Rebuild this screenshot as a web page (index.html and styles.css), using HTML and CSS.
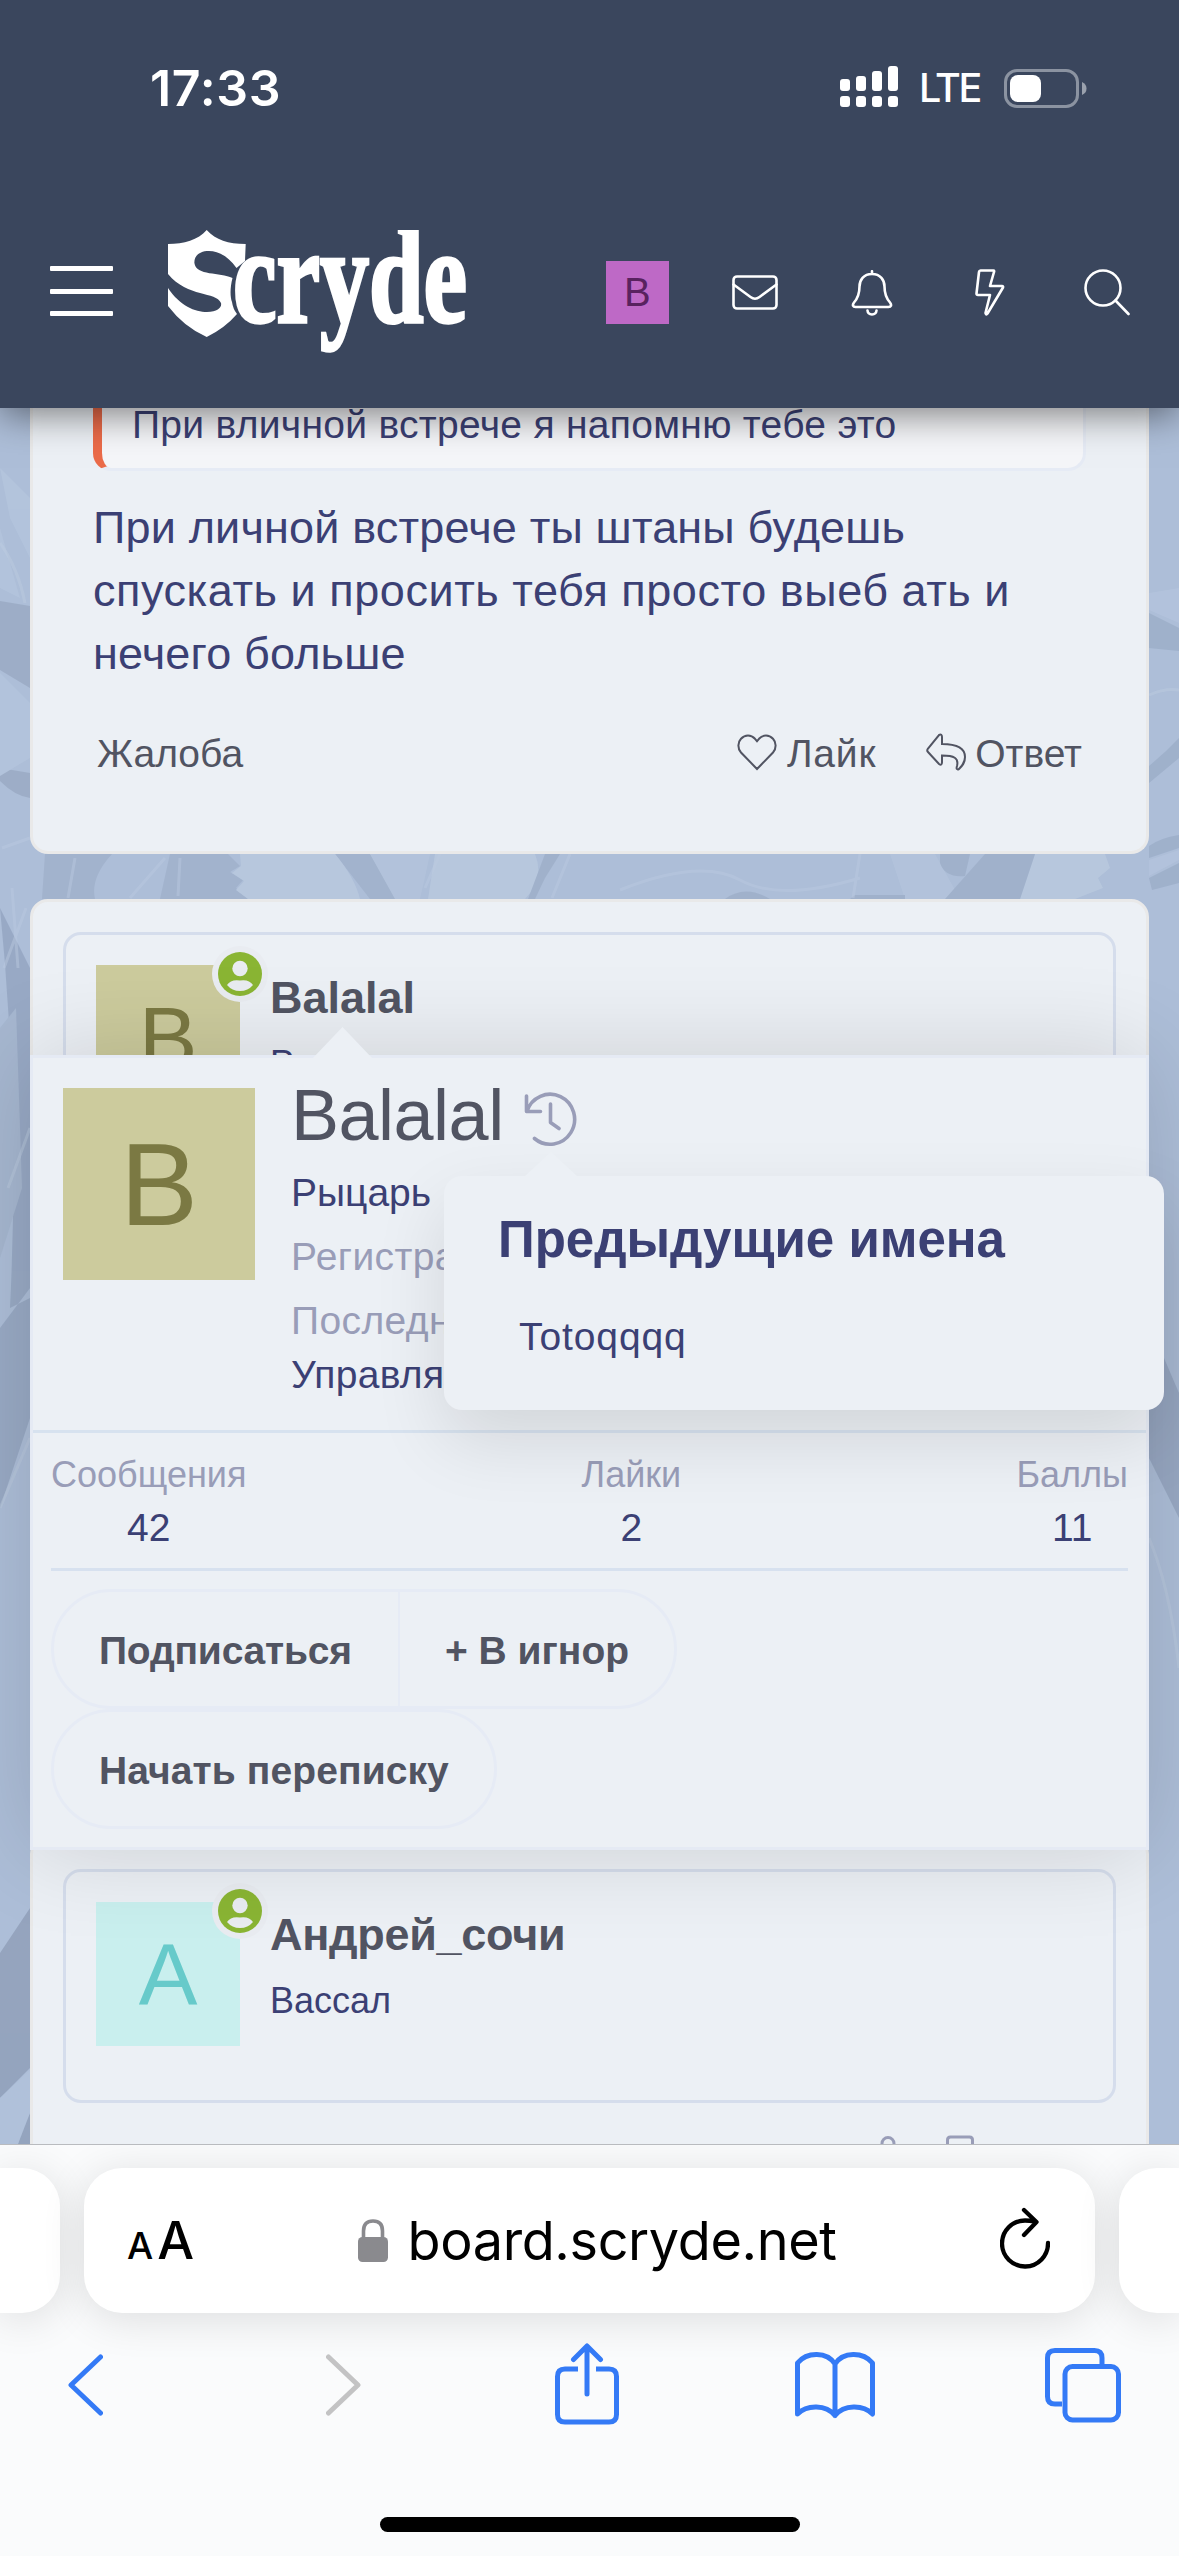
FILE: index.html
```html
<!DOCTYPE html>
<html lang="ru">
<head>
<meta charset="utf-8">
<title>Scryde</title>
<link rel="stylesheet" href="styles.css">
</head>
<body>
<header class="header">
  <div class="status">
    <span class="clock">17:33</span>
    <svg class="signal" width="58" height="42" viewBox="0 0 58 42" fill="#fff">
      <rect x="0" y="13" width="10" height="12" rx="3"/><rect x="16" y="10" width="10" height="15" rx="3"/><rect x="32" y="5" width="10" height="20" rx="3"/><rect x="48" y="0" width="10" height="25" rx="3"/>
      <rect x="0" y="30" width="10" height="11" rx="3"/><rect x="16" y="30" width="10" height="11" rx="3"/><rect x="32" y="30" width="10" height="11" rx="3"/><rect x="48" y="30" width="10" height="11" rx="3"/>
    </svg>
    <span class="lte">LTE</span>
    <svg class="battery" width="83" height="39" viewBox="0 0 83 39">
      <rect x="1.5" y="1.5" width="72" height="36" rx="11.5" fill="none" stroke="#8b93a1" stroke-width="3"/>
      <rect x="6" y="6" width="31" height="27" rx="8" fill="#fff"/>
      <path d="M78 13 Q82.500 15 82.500 19.500 Q82.500 24 78 26Z" fill="#9aa1ad"/>
    </svg>
  </div>
  <nav class="navbar">
    <svg class="burger" width="63" height="52" viewBox="0 0 63 52" fill="#fff"><rect y="1" width="63" height="5" rx="1"/><rect y="24" width="63" height="5" rx="1"/><rect y="46" width="63" height="5" rx="1"/></svg>
    <svg class="logo" width="300" height="126" viewBox="0 0 300 126" role="img" aria-label="Scryde">
      <path fill="#fff" d="M38.700 0C48 10 60 14 77.700 14L77 31 68.500 38C60 26 50 21 41 21 30 21 26 27 26.400 33 28 46 52 42 64.500 48 62 58 62 66 64 72Q65 79 69 84 57 98 38.700 107 16 97 0 76V58C12 76 27 82 39 82 50 82 54 77 53 73 48 61 20 68 0 44V14C16 14 30 10 38.700 0Z"/>
      <text class="wordmark" x="65" y="92" textLength="234" lengthAdjust="spacingAndGlyphs">cryde</text>
    </svg>
    <div class="tools">
      <span class="tool"><span class="avatar avatar-xs">B</span></span>
      <span class="tool"><svg width="46" height="36" viewBox="0 0 46 36"><rect x="1.500" y="1.500" width="43" height="32" rx="3.500"/><path d="M1.500 9.500 18.500 22Q23 25.500 27.500 22L44.500 9.500"/></svg></span>
      <span class="tool"><svg width="42" height="46" viewBox="0 0 42 46"><path d="M21 1.200V4M21 4C12.500 4 8.500 10 8.500 16.500 8.500 24 7 28 3 32.500 1 35 2 37 4.500 37H37.500C40 37 41 35 39 32.500 35 28 33.500 24 33.500 16.500 33.500 10 29.500 4 21 4ZM16.500 40.500C17 45.800 25 45.800 25.500 40.500"/></svg></span>
      <span class="tool"><svg width="30" height="47" viewBox="0 0 30 47"><path d="M5.500 1.500H18.500Q19.500 1.500 19 3L15 17H27Q28.500 17 28 18.500L12.500 44.500Q11 46.500 10.500 44L15 26H3Q1.500 26 1.500 24.500L4 3Q4.200 1.500 5.500 1.500Z"/></svg></span>
      <span class="tool"><svg width="46" height="47" viewBox="0 0 46 47"><circle cx="19" cy="19" r="17.500"/><path d="M31.500 31.500 44.500 45"/></svg></span>
    </div>
  </nav>
</header>

<main class="page">
  <svg class="backdrop" width="1179" height="1736" viewBox="0 0 1179 1736" preserveAspectRatio="none">
    <rect width="1179" height="1736" fill="#adbed8"/>
    <g class="shapes">
    <path fill="#9aaac4" d="M0 193 30 198V280L0 262ZM0 373Q15 388 30 390V365L0 360Z"/>
    <path fill="#b4c5dd" d="M0 60 30 90V150L10 110ZM0 265 30 295V350L0 368ZM0 120 20 190 0 180Z"/>
    <path fill="#a0b1cb" d="M45 446H112Q90 470 95 491H42ZM170 446H228L240 458 230 464 243 472 236 480 250 491H160ZM335 446H370L400 491H370Z"/>
    <path fill="#bacadf" d="M240 446H335Q355 470 360 491H248L236 482 244 473 232 465 241 458ZM435 446H535Q545 470 525 491H428ZM1035 446H1105L1110 460 1098 470 1103 480 1075 491H1020Z"/>
    <path fill="#b4c4dc" d="M370 446H430Q425 470 420 491H395ZM890 446H935L960 491H905Z"/>
    <path fill="#9eafc9" d="M940 446H970L965 468Q945 470 940 455ZM985 446H1035L1020 491H945ZM725 491Q745 476 770 491ZM855 487H905V491H850ZM545 446H560L545 470 535 491H528Z"/>
    <path fill="#94a5c1" d="M0 500Q20 700 10 900L30 890V560ZM0 920 30 880V1010L0 1100Z"/>
    <path fill="#a5b6cf" d="M0 620 16 600 22 780 0 850Z"/>
    <path fill="#8e9eb8" d="M0 1545 30 1500V1660L0 1690ZM18 1736 22 1720 30 1705V1736Z"/>
    <path fill="#b1c2db" d="M0 1690 30 1662V1705L18 1736H0Z"/>
    <path fill="#9caec9" d="M1149 205 1179 220V243L1149 240ZM1149 358Q1165 345 1179 330V350L1149 375ZM1149 438Q1160 430 1179 427V440L1149 450ZM1149 470 1179 455V475L1152 482Z"/>
    <path fill="#b4c4dd" d="M1149 185 1179 180V215L1149 202ZM1149 452 1179 442V452L1149 468Z"/>
    <path fill="#94a4bf" d="M1164 950 1179 985V1110L1149 1050V980Z"/>
    </g>
    <g class="streaks"><path d="M0 135Q18 160 25 195M2 440 30 430M12 480 18 560M4 560 26 500M8 780 30 720M0 1100 30 1030M1149 287Q1165 280 1179 282M1149 1130Q1170 1180 1179 1260"/><path d="M75 450 68 490M165 450 130 490M180 450 178 488M440 446 425 480M570 446 552 490M620 482Q700 450 740 472T860 470M860 446 853 490"/></g>
  </svg>

  <article class="post post-first">
    <blockquote class="quote">При вличной встрече я напомню тебе это</blockquote>
    <p class="message">При личной встрече ты штаны будешь<br><span class="loose">спускать и просить тебя просто выеб ать и</span><br>нечего больше</p>
    <footer class="actions">
      <a class="report">Жалоба</a>
      <a class="like"><svg width="40" height="37" viewBox="0 0 40 37"><path d="M20 35 4 18.500C.5 14.500 .5 8.500 4 4.800 8 .5 14 .5 18 4.800L20 7.200 22 4.800C26 .5 32 .5 36 4.800 39.500 8.500 39.500 14.500 36 18.500Z"/></svg>Лайк</a>
      <a class="reply"><svg width="40" height="38" viewBox="0 0 40 38"><path d="M13 2Q16 .5 16 4V11C30 11 39 14 39 24 39 30 36 33 33 36 31 37 30 36 31 33 33 25 28 22.500 16 22.500V29Q16 33 13 31L2 19Q.5 17.500 2 15.500Z"/></svg>Ответ</a>
    </footer>
  </article>

  <article class="post post-second">
    <div class="user">
      <div class="avatar-wrap"><span class="avatar avatar-m olive">B</span><svg class="online" width="56" height="56" viewBox="0 0 56 56"><circle cx="28" cy="28" r="28" fill="#e9ecf1"/><circle cx="28" cy="28" r="22" fill="#8ab534"/><circle cx="28" cy="22.500" r="7.700" fill="#e9ecf1"/><path d="M15 39Q19 33 28 34.500 37 33 41 39 36 45 28 45T15 39Z" fill="#e9ecf1"/></svg></div>
      <div class="who"><b class="name">Balalal</b><span class="rank">Рыцарь</span></div>
    </div>
  </article>

  <article class="post post-third">
    <div class="user">
      <div class="avatar-wrap"><span class="avatar avatar-m aqua">A</span><svg class="online" width="56" height="56" viewBox="0 0 56 56"><circle cx="28" cy="28" r="28" fill="#e9ecf1"/><circle cx="28" cy="28" r="22" fill="#8ab534"/><circle cx="28" cy="22.500" r="7.700" fill="#e9ecf1"/><path d="M15 39Q19 33 28 34.500 37 33 41 39 36 45 28 45T15 39Z" fill="#e9ecf1"/></svg></div>
      <div class="who"><b class="name tight">Андрей_сочи</b><span class="rank">Вассал</span></div>
    </div>
    <div class="meta">
      <svg width="34" height="38" viewBox="0 0 34 38"><circle cx="17" cy="8.500" r="6"/></svg>
      <svg width="28" height="38" viewBox="0 0 28 38"><path d="M1.500 36V5Q1.500 2 4.500 2H23.500Q26.500 2 26.500 5V36L14 28Z"/></svg>
    </div>
  </article>

  <section class="card">
    <i class="arrow card-arrow"></i>
    <div class="card-head">
      <span class="avatar avatar-l olive">B</span>
      <div class="card-info">
        <div class="card-name">Balalal<svg width="58" height="60" viewBox="0 0 58 60"><path d="M4.500 6V21.500H18.500M4.800 21.500A24.500 25 0 1 1 12.500 48.500M28.500 14V32.500L37 38.500"/></svg></div>
        <div class="line">Рыцарь</div>
        <div class="line muted">Регистрация</div>
        <div class="line muted">Последняя активность</div>
        <div class="line manage">Управлять</div>
      </div>
    </div>
    <div class="card-body">
      <dl class="stats">
        <div><dt>Сообщения</dt><dd>42</dd></div>
        <div><dt>Лайки</dt><dd>2</dd></div>
        <div><dt>Баллы</dt><dd>11</dd></div>
      </dl>
      <div class="buttons">
        <div class="group"><a class="follow">Подписаться</a><a class="ignore">+ В игнор</a></div>
        <div class="group"><a class="start">Начать переписку</a></div>
      </div>
    </div>
  </section>

  <section class="names">
    <i class="arrow names-arrow"></i>
    <h3>Предыдущие имена</h3>
    <p>Totoqqqq</p>
  </section>
</main>

<footer class="browser">
  <div class="tabs">
    <div class="tab tab-prev"></div>
    <div class="tab address">
      <span class="text-size"><small>A</small>A</span>
      <span class="url"><svg width="30" height="43" viewBox="0 0 30 43"><path d="M5.500 21V12Q5.500 2 15 2T24.500 12V21" fill="none" stroke="#8a8a8e" stroke-width="3.600"/><rect y="18" width="30" height="25" rx="4.500" fill="#8a8a8e"/></svg>board.scryde.net</span>
      <svg class="reload" width="50" height="62" viewBox="0 0 50 62" fill="none" stroke="#000" stroke-width="4.300" stroke-linecap="round" stroke-linejoin="round"><path d="M34 14.500Q30 13.500 25 13.500A23 23 0 1 0 48 36M24 3 36.500 15 24 28"/></svg>
    </div>
    <div class="tab tab-next"></div>
  </div>
  <div class="toolbar">
    <svg class="back" width="35" height="62" viewBox="0 0 35 62"><path d="M32.500 3 3 31 32.500 59"/></svg>
    <svg class="forward" width="35" height="62" viewBox="0 0 35 62"><path d="M2.500 3 32 31 2.500 59"/></svg>
    <svg class="share" width="64" height="82" viewBox="0 0 64 82"><path d="M23 26H10Q2.500 26 2.500 33.500V71.500Q2.500 79 10 79H54Q61.500 79 61.500 71.500V33.500Q61.500 26 54 26H41" stroke-linecap="butt"/><path d="M32 51V4M18.500 16.500 32 3 45.500 16.500"/></svg>
    <svg class="book" width="80" height="68" viewBox="0 0 80 68"><path d="M40 64.500V13C32 .5 12 .5 2.500 12V63C12 53.500 31 53.500 40 64.500 49 53.500 68 53.500 77.500 63V12C68 .5 48 .5 40 13"/></svg>
    <svg class="pages" width="76" height="75" viewBox="0 0 76 75"><path d="M57 17V10Q57 2.500 49.500 2.500H10Q2.500 2.500 2.500 10V48.500Q2.500 56 10 56H17" stroke-linecap="butt"/><rect x="20" y="18.500" width="53.500" height="53.500" rx="7.500"/></svg>
  </div>
  <div class="home"></div>
</footer>
</body>
</html>
```
FILE: styles.css
```css
* { box-sizing: border-box; }
html, body { margin: 0; }
body {
  width: 1179px;
  height: 2556px;
  overflow: hidden;
  display: flex;
  flex-direction: column;
  font-family: "Liberation Sans", Arial, sans-serif;
  font-size: 39px;
  line-height: 55px;
  color: #3b4074;
}
svg { display: block; flex: none; }

/* header */
.header {
  position: relative;
  z-index: 5;
  height: 408px;
  flex: none;
  background: #3a465d;
  box-shadow: 0 6px 36px rgba(0, 0, 0, .5);
}
.status {
  height: 177px;
  display: flex;
  align-items: center;
  padding: 0 92px 0 150px;
  color: #fff;
  font-family: Inter, sans-serif;
}
.clock { font-size: 50px; font-weight: 600; letter-spacing: .7px; }
.signal { margin: 0 0 3px auto; }
.lte { width: 82px; padding-left: 21px; font-size: 39.5px; font-weight: 500; letter-spacing: -2.5px; }
.battery { margin-left: 24px; }
.navbar {
  height: 231px;
  display: flex;
  align-items: center;
  padding: 0 13px 0 50px;
}
.burger { margin-bottom: 4px; }
.logo { margin-left: 55px; }
.wordmark { font: bold 136px "Liberation Serif", serif; fill: #fff; stroke: #fff; stroke-width: 3.5; }
.tools { display: flex; margin-left: auto; }
.tool { width: 117.5px; display: flex; justify-content: center; align-items: center; }
.tool svg { fill: none; stroke: #fff; stroke-width: 2.6; stroke-linejoin: round; stroke-linecap: round; }

.avatar { display: flex; align-items: center; justify-content: center; flex: none; }
.avatar-xs { width: 63px; height: 63px; background: #be69c6; color: #59225f; font-size: 40px; }
.avatar-m { width: 144px; height: 144px; font-size: 88px; }
.avatar-l { width: 192px; height: 192px; font-size: 117px; }
.olive { background: #cccb9d; color: #7b7943; }
.aqua { background: #c9efee; color: #67caca; }

/* forum page */
.page {
  position: relative;
  height: 1736px;
  flex: none;
  overflow: hidden;
  padding: 0 30px;
}
.backdrop { position: absolute; left: 0; top: 0; }
.shapes { opacity: .8; }
.streaks { fill: none; stroke: #bccbe1; stroke-width: 3; opacity: .45; }
.post {
  position: relative;
  background: #ecf0f5;
  border: 3px solid #e9e9e9;
  border-radius: 18px;
}
.post-first {
  height: 446px;
  padding: 0 60px;
  border-top: 0;
  border-radius: 0 0 18px 18px;
}
.quote {
  margin: 0;
  height: 63px;
  padding-left: 30px;
  border: 3px solid #e6ebf5;
  border-top: 0;
  border-left: 9px solid #eb6b49;
  border-radius: 0 0 18px 18px;
  background: #f5f6f9;
  line-height: 33px;
  letter-spacing: .3px;
}
.message { margin: 25px 0 0; font-size: 45px; line-height: 63px; letter-spacing: .17px; white-space: nowrap; }
.loose { letter-spacing: .55px; }
.actions { display: flex; margin-top: 41px; color: #515462; }
.actions a { display: flex; align-items: center; }
.actions svg { fill: none; stroke: #515462; stroke-width: 2; margin-top: -3px; }
.report { padding-left: 4px; }
.like { margin-left: auto; gap: 10px; letter-spacing: .8px; }
.reply { margin-left: 50px; gap: 9px; padding-right: 4px; }

.post-second { height: 892px; margin-top: 45px; padding: 30px; }
.post-third { height: 400px; margin-top: 45px; padding: 30px; }
.user {
  height: 234px;
  display: flex;
  gap: 30px;
  padding: 30px;
  border: 3px solid #d5ddec;
  border-radius: 18px;
}
.avatar-wrap { position: relative; height: 144px; }
.online { position: absolute; left: 116px; top: -19px; }
.who { display: flex; flex-direction: column; padding-top: 1px; }
.name { font-size: 45px; line-height: 63px; color: #515462; }
.tight { letter-spacing: -.3px; }
.rank { margin-top: 10px; font-size: 36px; line-height: 50px; }
.meta { display: flex; justify-content: flex-end; gap: 41px; padding: 32px 142px 0 0; }
.meta svg { fill: none; stroke: #999db8; stroke-width: 3; }

/* profile card over the posts */
.card {
  position: absolute;
  left: 30px;
  top: 647px;
  width: 1119px;
  height: 795px;
  background: #ecf0f5;
  border: 3px solid #e5eaf4;
  box-shadow: 0 0 90px rgba(0, 0, 0, .14);
}
.arrow { position: absolute; background: #ecf0f5; clip-path: polygon(50% 0, 100% 100%, 0 100%); }
.card-arrow { left: 280px; top: -31px; width: 59px; height: 31px; }
.card-head { display: flex; gap: 36px; height: 375px; padding: 30px; border-bottom: 3px solid #d7e2ef; }
.card-info { margin-top: -11px; white-space: nowrap; }
.card-name {
  display: flex;
  align-items: center;
  gap: 18px;
  margin-bottom: 8px;
  font-size: 72px;
  line-height: 76px;
  letter-spacing: -.5px;
  color: #515462;
}
.card-name svg { margin-top: 10px; fill: none; stroke: #999db8; stroke-width: 3.6; stroke-linecap: round; stroke-linejoin: round; }
.line { line-height: 64px; }
.muted { color: #999db8; letter-spacing: .4px; }
.manage { line-height: 55px; margin-top: -6px; letter-spacing: .3px; }
.card-body { padding: 0 18px; }
.stats {
  display: flex;
  justify-content: space-between;
  height: 138px;
  margin: 0 0 18px;
  padding-top: 17px;
  border-bottom: 3px solid #d7e1ef;
  text-align: center;
}
.stats dt { font-size: 36px; line-height: 50px; color: #999db8; }
.stats dd { margin: 1px 0 0; line-height: 53px; }
.buttons { display: flex; flex-direction: column; align-items: flex-start; font-weight: bold; color: #515462; }
.group { display: flex; height: 120px; border: 3px solid #e6ebf5; border-radius: 60px; line-height: 118px; white-space: nowrap; }
.follow { width: 346px; padding-left: 45px; border-right: 2px solid #e6ebf5; letter-spacing: -.2px; }
.ignore { width: 274px; padding-left: 45px; }
.start { width: 440px; padding-left: 45px; letter-spacing: .1px; }

.names {
  position: absolute;
  left: 444px;
  top: 768px;
  width: 720px;
  height: 234px;
  padding: 28px 54px;
  border-radius: 18px;
  background: #ecf0f5;
  box-shadow: 0 30px 72px rgba(0, 0, 0, .11);
}
.names-arrow { left: 80px; top: -24px; width: 54px; height: 25px; }
.names h3 { margin: 0; font-size: 51px; line-height: 72px; }
.names p { margin: 33px 0 0 21px; letter-spacing: .9px; }

/* browser bottom bar */
.browser {
  position: relative;
  z-index: 6;
  height: 412px;
  flex: none;
  padding-top: 23px;
  border-top: 1px solid #b9bbbf;
  background: #fafbfc;
  overflow: hidden;
  color: #000;
  font-family: Inter, sans-serif;
}
.tabs { display: flex; gap: 24px; height: 145px; }
.tab { background: #fff; border-radius: 38px; box-shadow: 0 6px 44px rgba(0, 0, 0, .12); }
.tab-prev { width: 60px; border-radius: 0 38px 38px 0; }
.tab-next { width: 60px; border-radius: 38px 0 0 38px; }
.address {
  width: 1011px;
  display: flex;
  align-items: center;
  justify-content: space-between;
  padding: 0 45px 0 43px;
}
.text-size { display: flex; align-items: baseline; gap: 4px; margin-top: 4px; font-size: 52px; font-weight: 450; }
.text-size small { font-size: 37px; }
.url { display: flex; align-items: center; gap: 20px; font-size: 54px; letter-spacing: -.4px; }
.reload { margin-top: -6px; }
.toolbar { display: flex; align-items: center; height: 82px; margin-top: 31px; padding-left: 68px; }
.toolbar svg { fill: none; stroke: #347af6; stroke-width: 5; stroke-linecap: round; stroke-linejoin: round; }
.toolbar .forward { margin-left: 223px; stroke: #c3c3c4; }
.share { margin: -2px 0 0 194px; }
.book { margin-left: 176px; }
.pages { margin-left: 170px; }
.home { width: 420px; height: 15px; margin: 91px 0 0 380px; border-radius: 8px; background: #000; }
```
